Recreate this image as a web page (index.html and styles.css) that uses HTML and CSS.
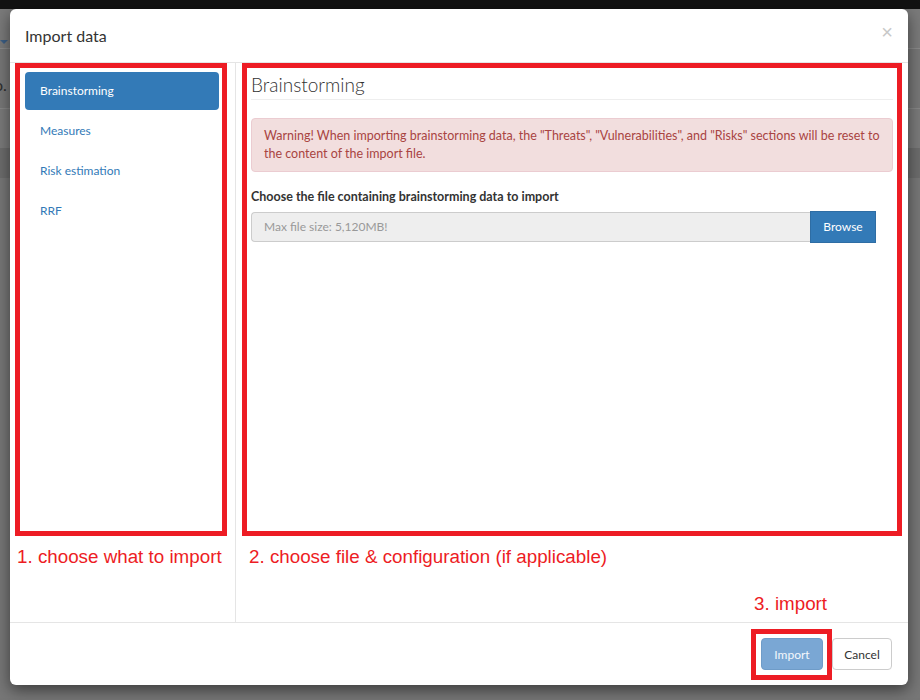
FILE: index.html
```html
<!DOCTYPE html>
<html>
<head>
<meta charset="utf-8">
<link rel="stylesheet" href="styles.css">
</head>
<body>
<div class="page">
  <div class="topbar"></div>
  <div class="bg-row bg-row1"><span class="caret"></span></div>
  <div class="bg-row bg-row2"><span class="bg-text">o.</span></div>
  <div class="bg-row bg-row3"></div>
  <div class="bg-row bg-row4"></div>
  <div class="bg-row bg-row5"></div>
</div>

<div class="modal">
  <div class="modal-header">
    <h4 class="modal-title">Import data</h4>
    <span class="close">&times;</span>
  </div>
  <div class="modal-body">
    <div class="side">
      <ul class="pills">
        <li class="pill active">Brainstorming</li>
        <li class="pill">Measures</li>
        <li class="pill">Risk estimation</li>
        <li class="pill">RRF</li>
      </ul>
    </div>
    <div class="content">
      <h3 class="section-title">Brainstorming</h3>
      <div class="alert">Warning! When importing brainstorming data, the "Threats", "Vulnerabilities", and "Risks" sections will be reset to<br>the content of the import file.</div>
      <label class="field-label">Choose the file containing brainstorming data to import</label>
      <div class="input-group">
        <div class="file-input">Max file size: 5,120MB!</div>
        <span class="btn btn-browse">Browse</span>
      </div>
    </div>
  </div>
  <div class="modal-footer">
    <span class="btn btn-import">Import</span>
    <span class="btn btn-cancel">Cancel</span>
  </div>

  <div class="annot-box box1"></div>
  <div class="annot-box box2"></div>
  <div class="annot-box box3"></div>
  <div class="annot-text text1">1. choose what to import</div>
  <div class="annot-text text2">2. choose file &amp; configuration (if applicable)</div>
  <div class="annot-text text3">3. import</div>
</div>
</body>
</html>
```
FILE: styles.css
```css
html, body {
  margin: 0;
  padding: 0;
}
body {
  width: 920px;
  height: 700px;
  overflow: hidden;
  background: #767676;
  font-family: Lato, "Noto Sans", sans-serif;
  position: relative;
}
.page {
  display: flex;
  flex-direction: column;
}
.topbar {
  height: 9px;
  background: #121212;
}
.bg-row {
  position: relative;
}
.bg-row1 {
  height: 39px;
  background: #7a7a7a;
  border-bottom: 1px solid #8a8a8a;
}
.caret {
  position: absolute;
  left: 0;
  top: 31px;
  width: 0;
  height: 0;
  border-left: 4px solid transparent;
  border-right: 4px solid transparent;
  border-top: 4px solid #3c5f85;
}
.bg-row2 {
  height: 59px;
  background: #777;
  border-bottom: 1px solid #878787;
}
.bg-text {
  position: absolute;
  left: -6px;
  top: 26px;
  font-size: 16px;
  color: #2e2e2e;
}
.bg-row3 {
  height: 39px;
  background: #7a7a7a;
}
.bg-row4 {
  height: 30px;
  background: #6c6c6c;
}
.bg-row5 {
  height: 520px;
  background: #777;
}

.modal {
  position: absolute;
  left: 10px;
  top: 9px;
  width: 898px;
  height: 676px;
  background: #fff;
  border-radius: 6px;
  box-shadow: 0 5px 15px rgba(0, 0, 0, 0.5);
  display: flex;
  flex-direction: column;
  color: #333;
}
.modal-header {
  height: 53px;
  border-bottom: 1px solid #e5e5e5;
  display: flex;
  align-items: center;
  justify-content: space-between;
  padding: 0 15px;
  box-sizing: content-box;
}
.modal-title {
  margin: 0;
  font-size: 16px;
  font-weight: 400;
  color: #333;
  padding-bottom: 1px;
}
.close {
  font-size: 20px;
  color: #c8c8c8;
  line-height: 1;
  margin-top: -8px;
  font-family: "Liberation Sans", Arial, sans-serif;
}
.modal-body {
  flex: 1;
  display: flex;
  min-height: 0;
}
.side {
  width: 226px;
  border-right: 1px solid #e5e5e5;
  padding: 9px 16px 0 15px;
  box-sizing: border-box;
}
.pills {
  list-style: none;
  margin: 0;
  padding: 0;
  display: flex;
  flex-direction: column;
  gap: 2px;
}
.pill {
  height: 38px;
  line-height: 38px;
  padding: 0 15px;
  border-radius: 4px;
  font-size: 12px;
  color: #337ab7;
}
.pill.active {
  background: #337ab7;
  color: #fff;
}
.content {
  flex: 1;
  padding: 0 15px;
  display: flex;
  flex-direction: column;
}
.section-title {
  margin: 0;
  padding: 11px 0 3px 0;
  font-size: 19px;
  font-weight: 300;
  line-height: 22px;
  color: #333;
  border-bottom: 1px solid #eee;
}
.alert {
  margin-top: 18px;
  background: #f2dede;
  border: 1px solid #ebccd1;
  border-radius: 4px;
  color: #a94442;
  padding: 8px 12px;
  font-size: 12.5px;
  line-height: 18px;
  white-space: nowrap;
}
.field-label {
  margin-top: 17px;
  font-size: 12.5px;
  font-weight: 700;
  line-height: 16px;
  color: #333;
}
.input-group {
  margin-top: 6px;
  display: flex;
  width: 625px;
}
.file-input {
  flex: 1;
  height: 30px;
  box-sizing: border-box;
  background: #eee;
  border: 1px solid #ccc;
  border-right: none;
  border-radius: 4px 0 0 4px;
  padding: 0 12px;
  line-height: 28px;
  font-size: 12px;
  color: #999;
  margin-top: 1px;
}
.btn {
  display: inline-flex;
  align-items: center;
  justify-content: center;
  box-sizing: border-box;
  font-size: 12px;
}
.btn-browse {
  width: 66px;
  height: 32px;
  background: #337ab7;
  border: 1px solid #2e6da4;
  color: #fff;
  padding-bottom: 1px;
}
.modal-footer {
  border-top: 1px solid #e5e5e5;
  display: flex;
  justify-content: flex-end;
  align-items: flex-start;
  gap: 9px;
  padding: 15px 16px 0 0;
  box-sizing: border-box;
  height: 63px;
}
.btn-import {
  width: 62px;
  height: 32px;
  border-radius: 4px;
  background: #7aa7d4;
  border: 1px solid #6f9cc8;
  color: #f4f8fc;
}
.btn-cancel {
  width: 60px;
  height: 32px;
  border-radius: 4px;
  background: #fff;
  border: 1px solid #ccc;
  color: #333;
}

.annot-box {
  position: absolute;
  border: 5px solid #ed1c24;
  box-sizing: border-box;
}
.box1 {
  left: 5px;
  top: 54px;
  width: 212px;
  height: 473px;
}
.box2 {
  left: 232px;
  top: 54px;
  width: 660px;
  height: 473px;
}
.box3 {
  left: 741px;
  top: 620px;
  width: 81px;
  height: 51px;
}
.annot-text {
  position: absolute;
  font-family: "Liberation Sans", Arial, sans-serif;
  font-size: 18.8px;
  line-height: 22px;
  color: #ed1c24;
  white-space: nowrap;
}
.text1 {
  left: 7px;
  top: 537px;
}
.text2 {
  left: 239px;
  top: 537px;
}
.text3 {
  left: 744px;
  top: 584px;
}
```
